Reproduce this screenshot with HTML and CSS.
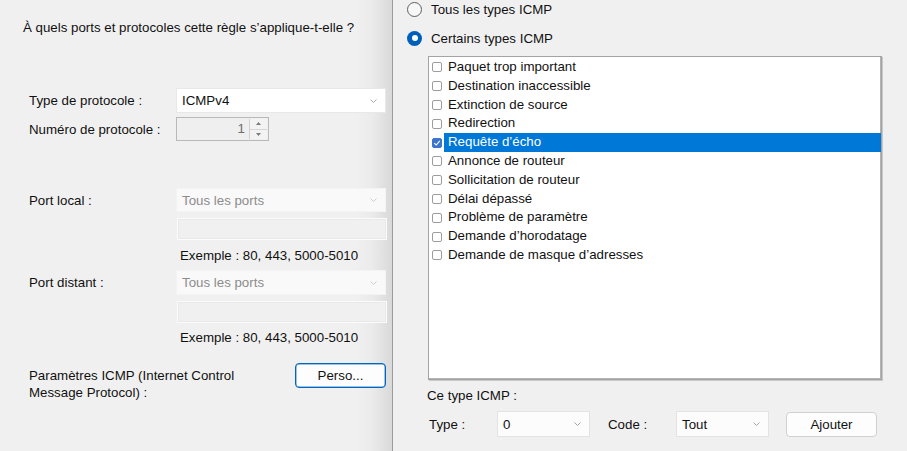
FILE: index.html
```html
<!DOCTYPE html>
<html lang="fr">
<head>
<meta charset="utf-8">
<title>Protocole et ports</title>
<link rel="stylesheet" href="styles.css">
</head>
<body>
<div class="screen">
  <section class="left">
    <p class="question">À quels ports et protocoles cette règle s’applique-t-elle ?</p>

    <div class="row r-type">
      <span class="lbl">Type de protocole :</span>
      <div class="combo wide"><span>ICMPv4</span><svg class="chev" width="7" height="4" viewBox="0 0 7 4"><path d="M0.5 0.5 L3.5 3.5 L6.5 0.5" fill="none" stroke="#a8a8a8" stroke-width="1"/></svg></div>
    </div>
    <div class="row r-num">
      <span class="lbl">Numéro de protocole :</span>
      <div class="spin">
        <span class="spin-val">1</span>
        <div class="spin-btns">
          <div class="spin-btn"><svg width="5" height="3" viewBox="0 0 5 3"><path d="M0 3 L2.5 0 L5 3 Z" fill="#7a7a7a"/></svg></div>
          <div class="spin-btn"><svg width="5" height="3" viewBox="0 0 5 3"><path d="M0 0 L2.5 3 L5 0 Z" fill="#7a7a7a"/></svg></div>
        </div>
      </div>
    </div>

    <div class="row r-local">
      <span class="lbl">Port local :</span>
      <div class="combo wide disabled"><span>Tous les ports</span><svg class="chev" width="7" height="4" viewBox="0 0 7 4"><path d="M0.5 0.5 L3.5 3.5 L6.5 0.5" fill="none" stroke="#cfcfcf" stroke-width="1"/></svg></div>
    </div>
    <div class="row r-tb"><span class="lbl"></span><div class="textbox"></div></div>
    <div class="row r-hint"><span class="lbl"></span><span class="hint">Exemple : 80, 443, 5000-5010</span></div>

    <div class="row r-dist">
      <span class="lbl">Port distant :</span>
      <div class="combo wide disabled"><span>Tous les ports</span><svg class="chev" width="7" height="4" viewBox="0 0 7 4"><path d="M0.5 0.5 L3.5 3.5 L6.5 0.5" fill="none" stroke="#cfcfcf" stroke-width="1"/></svg></div>
    </div>
    <div class="row r-tb"><span class="lbl"></span><div class="textbox"></div></div>
    <div class="row r-hint2"><span class="lbl"></span><span class="hint">Exemple : 80, 443, 5000-5010</span></div>

    <div class="row r-icmp">
      <span class="lbl-multi">Paramètres ICMP (Internet Control<br>Message Protocol) :</span>
      <button class="btn perso">Perso...</button>
    </div>
  </section>

  <section class="right">
    <div class="radio-row r1"><span class="radio"></span><span>Tous les types ICMP</span></div>
    <div class="radio-row r2"><span class="radio on"></span><span>Certains types ICMP</span></div>

    <div class="listbox">
      <div class="item"><span class="cb"></span><span class="txt">Paquet trop important</span></div>
      <div class="item"><span class="cb"></span><span class="txt">Destination inaccessible</span></div>
      <div class="item"><span class="cb"></span><span class="txt">Extinction de source</span></div>
      <div class="item"><span class="cb"></span><span class="txt">Redirection</span></div>
      <div class="item sel"><span class="cb checked"><svg width="8" height="8" viewBox="0 0 8 8"><path d="M1.2 4.2 L3.2 6 L6.8 1.8" fill="none" stroke="#ffffff" stroke-width="1.1"/></svg></span><span class="txt">Requête d’écho</span></div>
      <div class="item"><span class="cb"></span><span class="txt">Annonce de routeur</span></div>
      <div class="item"><span class="cb"></span><span class="txt">Sollicitation de routeur</span></div>
      <div class="item"><span class="cb"></span><span class="txt">Délai dépassé</span></div>
      <div class="item"><span class="cb"></span><span class="txt">Problème de paramètre</span></div>
      <div class="item"><span class="cb"></span><span class="txt">Demande d’horodatage</span></div>
      <div class="item"><span class="cb"></span><span class="txt">Demande de masque d’adresses</span></div>
    </div>

    <p class="this-type">Ce type ICMP :</p>
    <div class="type-row">
      <span class="tlbl">Type :</span>
      <div class="combo small"><span>0</span><svg class="chev" width="7" height="4" viewBox="0 0 7 4"><path d="M0.5 0.5 L3.5 3.5 L6.5 0.5" fill="none" stroke="#a8a8a8" stroke-width="1"/></svg></div>
      <span class="tlbl code">Code :</span>
      <div class="combo small"><span>Tout</span><svg class="chev" width="7" height="4" viewBox="0 0 7 4"><path d="M0.5 0.5 L3.5 3.5 L6.5 0.5" fill="none" stroke="#a8a8a8" stroke-width="1"/></svg></div>
      <button class="btn add">Ajouter</button>
    </div>
  </section>
</div>
</body>
</html>
```

FILE: styles.css
```css
* { box-sizing: border-box; }
html, body { margin: 0; padding: 0; }
body {
  font-family: "Liberation Sans", Arial, sans-serif;
  font-size: 13.3px;
  color: #111;
  background: #f0f0f0;
}
.screen {
  display: flex;
  width: 907px;
  height: 451px;
  overflow: hidden;
}

/* ---------- left window ---------- */
.left {
  width: 392px;
  flex: none;
  height: 451px;
  padding-left: 23px;
  background: linear-gradient(to right, #f0f0f0 0, #f0f0f0 355px, #ebebeb 372px, #d9d9d9 392px);
}
.question {
  margin: 20px 0 0 0;
  line-height: 16px;
}
.row {
  display: flex;
  align-items: center;
  padding-left: 6px;
}
.lbl {
  width: 147px;
  flex: none;
}
.r-type { margin-top: 52px; height: 25px; }
.r-num { margin-top: 4px; height: 24px; }
.r-local { margin-top: 47px; height: 24px; }
.r-tb { margin-top: 6px; height: 22px; }
.r-hint { margin-top: 8px; height: 16px; }
.r-dist { margin-top: 6px; height: 25px; }
.r-hint2 { margin-top: 7px; height: 16px; }
.r-icmp {
  margin-top: 17px;
  align-items: flex-start;
  justify-content: space-between;
  width: 363px;
}
.lbl-multi {
  margin-top: 4px;
  line-height: 17px;
}
.hint {
  margin-left: 4px;
  line-height: 16px;
}

.combo {
  display: flex;
  align-items: center;
  justify-content: space-between;
  height: 100%;
  background: #ffffff;
  border: 1px solid #e8e8e8;
  padding: 0 8px 0 5px;
}
.combo.wide { width: 210px; }
.combo.disabled {
  background: #f9f9f9;
  border-color: #f3f3f3;
  color: #8c8c8c;
}
.chev { flex: none; }

.spin {
  display: flex;
  align-items: stretch;
  width: 93px;
  height: 100%;
  border: 1px solid #b9b9b9;
  background: #efefef;
}
.spin-val {
  flex: 1;
  text-align: right;
  line-height: 22px;
  padding-right: 4px;
  color: #6d6d6d;
}
.spin-btns {
  width: 18px;
  display: flex;
  flex-direction: column;
  border-left: 1px solid #d2d2d2;
  margin: 1px 1px 1px 0;
}
.spin-btn {
  flex: 1;
  display: flex;
  align-items: center;
  justify-content: center;
  background: #f3f3f3;
}
.spin-btn + .spin-btn { border-top: 1px solid #d6d6d6; }

.textbox {
  width: 210px;
  height: 100%;
  margin-left: 1px;
  background: #f0f0f0;
  border: 1px solid #fbfbfb;
  box-shadow: inset 0 0 0 1px #e9e9e9;
}

.btn {
  font-family: inherit;
  font-size: 13.3px;
  color: #111;
  background: #fdfdfd;
  border: 1px solid #d0d0d0;
  border-radius: 4px;
  padding: 0;
}
.perso {
  width: 91px;
  height: 25px;
  border: 1px solid #0067c0;
  box-shadow: inset 0 0 0 0.5px #3a86cf;
}

/* ---------- right window ---------- */
.right {
  flex: 1;
  height: 451px;
  border-left: 1px solid #9c9c9c;
  background: #f0f0f0;
  padding-left: 14px;
}
.radio-row {
  display: flex;
  align-items: center;
  height: 18px;
}
.r1 { margin-top: 0; }
.r2 { margin-top: 11px; }
.radio {
  width: 15px;
  height: 15px;
  border-radius: 50%;
  border: 1px solid #5f5f5f;
  background: #f7f7f7;
  margin-right: 9px;
  flex: none;
  display: flex;
  align-items: center;
  justify-content: center;
}
.radio.on {
  border: none;
  background: #005fb8;
}
.radio.on::after {
  content: "";
  width: 6px;
  height: 6px;
  border-radius: 50%;
  background: #ffffff;
}

.listbox {
  margin: 9px 0 0 21px;
  width: 454px;
  height: 324px;
  background: #ffffff;
  border: 1px solid #a3a3a3;
  box-shadow: inset -1px -1px 0 #b4b4b4, 1px 1px 0 #c8c8c8;
  padding-top: 1px;
}
.item {
  display: flex;
  align-items: center;
  height: 18.8px;
  padding-left: 3px;
}
.cb {
  width: 10px;
  height: 10px;
  border: 1px solid #9d9d9d;
  border-radius: 2px;
  background: #fff;
  flex: none;
  display: flex;
  align-items: center;
  justify-content: center;
}
.cb.checked {
  background: #3a76cc;
  border-color: #3a76cc;
}
.txt {
  margin-left: 2px;
  padding-left: 4px;
  height: 100%;
  line-height: 18.8px;
  flex: 1;
}
.item.sel .txt {
  background: #0078d7;
  color: #ffffff;
}

.this-type {
  margin: 8px 0 0 20px;
  line-height: 16px;
}
.type-row {
  display: flex;
  align-items: center;
  margin: 7px 0 0 22px;
  height: 26px;
}
.tlbl { width: 68px; flex: none; }
.tlbl.code { margin-left: 18px; }
.combo.small {
  width: 93px;
  padding-left: 5px;
  background: #fcfcfc;
  border-color: #e3e3e3;
}
.add {
  margin-left: 17px;
  width: 91px;
  height: 25px;
}
```
